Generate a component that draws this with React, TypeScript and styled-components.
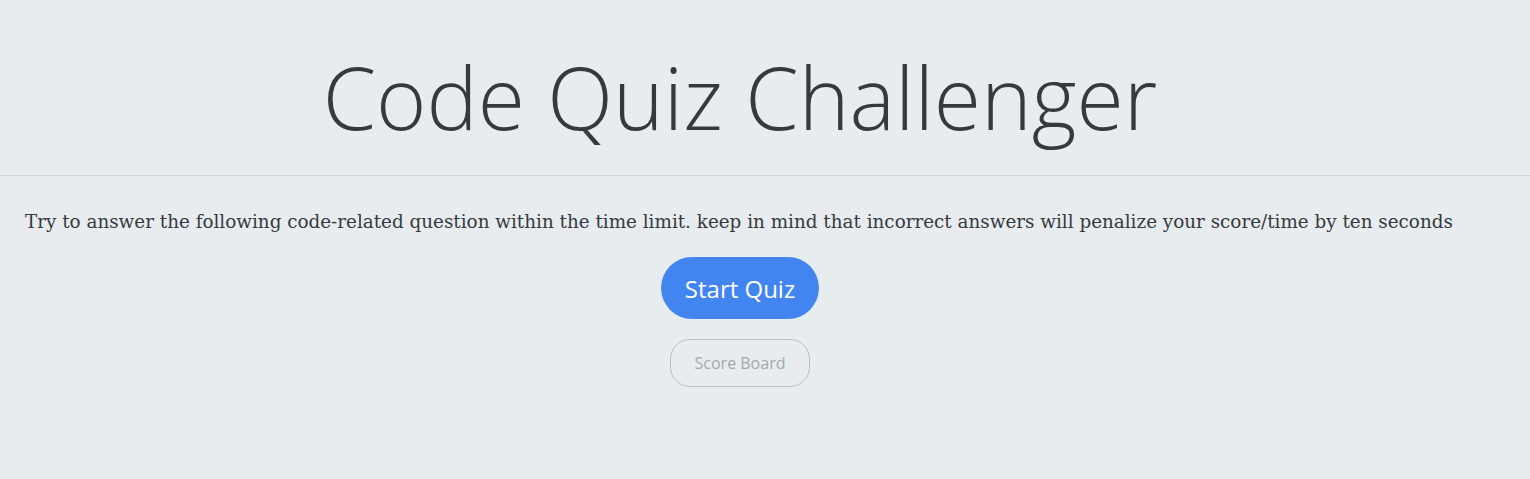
import React from "react";
import styled, { createGlobalStyle } from "styled-components";

const Global = createGlobalStyle`
  html, body { margin: 0; padding: 0; background: #e9ecef; }
  body { font-family: "Open Sans", sans-serif; }
`;

const Page = styled.div`
  width: 1530px;
  height: 479px;
  background: #e9ecef;
  box-sizing: border-box;
  padding-top: 40px;
`;

const Header = styled.header`
  width: 1480px;
  text-align: center;
`;

const Title = styled.h1`
  margin: 0;
  height: 135px;
  font-family: "Open Sans", sans-serif;
  font-weight: 300;
  font-size: 86px;
  line-height: 114px;
  color: #343a40;
`;

const Rule = styled.hr`
  margin: 0;
  border: 0;
  border-top: 1px solid #d3d6da;
`;

const Body = styled.main`
  width: 1480px;
  display: flex;
  flex-direction: column;
  align-items: center;
  padding-top: 29px;
`;

const Intro = styled.p`
  align-self: flex-start;
  margin: 2px 0 20px 25px;
  font-family: "DejaVu Serif", serif;
  font-size: 18.35px;
  line-height: 30px;
  color: #343a40;
  white-space: nowrap;
`;

const PrimaryButton = styled.button`
  height: 62px;
  padding: 0 24px;
  border: 0;
  border-radius: 31px;
  background: #4285f0;
  color: #fff;
  font-family: "Open Sans", sans-serif;
  font-size: 24px;
  cursor: pointer;
`;

const GhostButton = styled.button`
  margin-top: 20px;
  height: 48px;
  padding: 0 24px;
  border: 1px solid #b9bcc0;
  border-radius: 20px;
  background: transparent;
  color: #a3a8ad;
  font-family: "Open Sans", sans-serif;
  font-size: 16px;
  cursor: pointer;
`;

export default function App() {
  return (
    <Page>
      <Global />
      <Header>
        <Title>Code Quiz Challenger</Title>
      </Header>
      <Rule />
      <Body>
        <Intro>
          Try to answer the following code-related question within the time limit. keep in mind that incorrect answers will penalize your score/time by ten seconds
        </Intro>
        <PrimaryButton>Start Quiz</PrimaryButton>
        <GhostButton>Score Board</GhostButton>
      </Body>
    </Page>
  );
}
